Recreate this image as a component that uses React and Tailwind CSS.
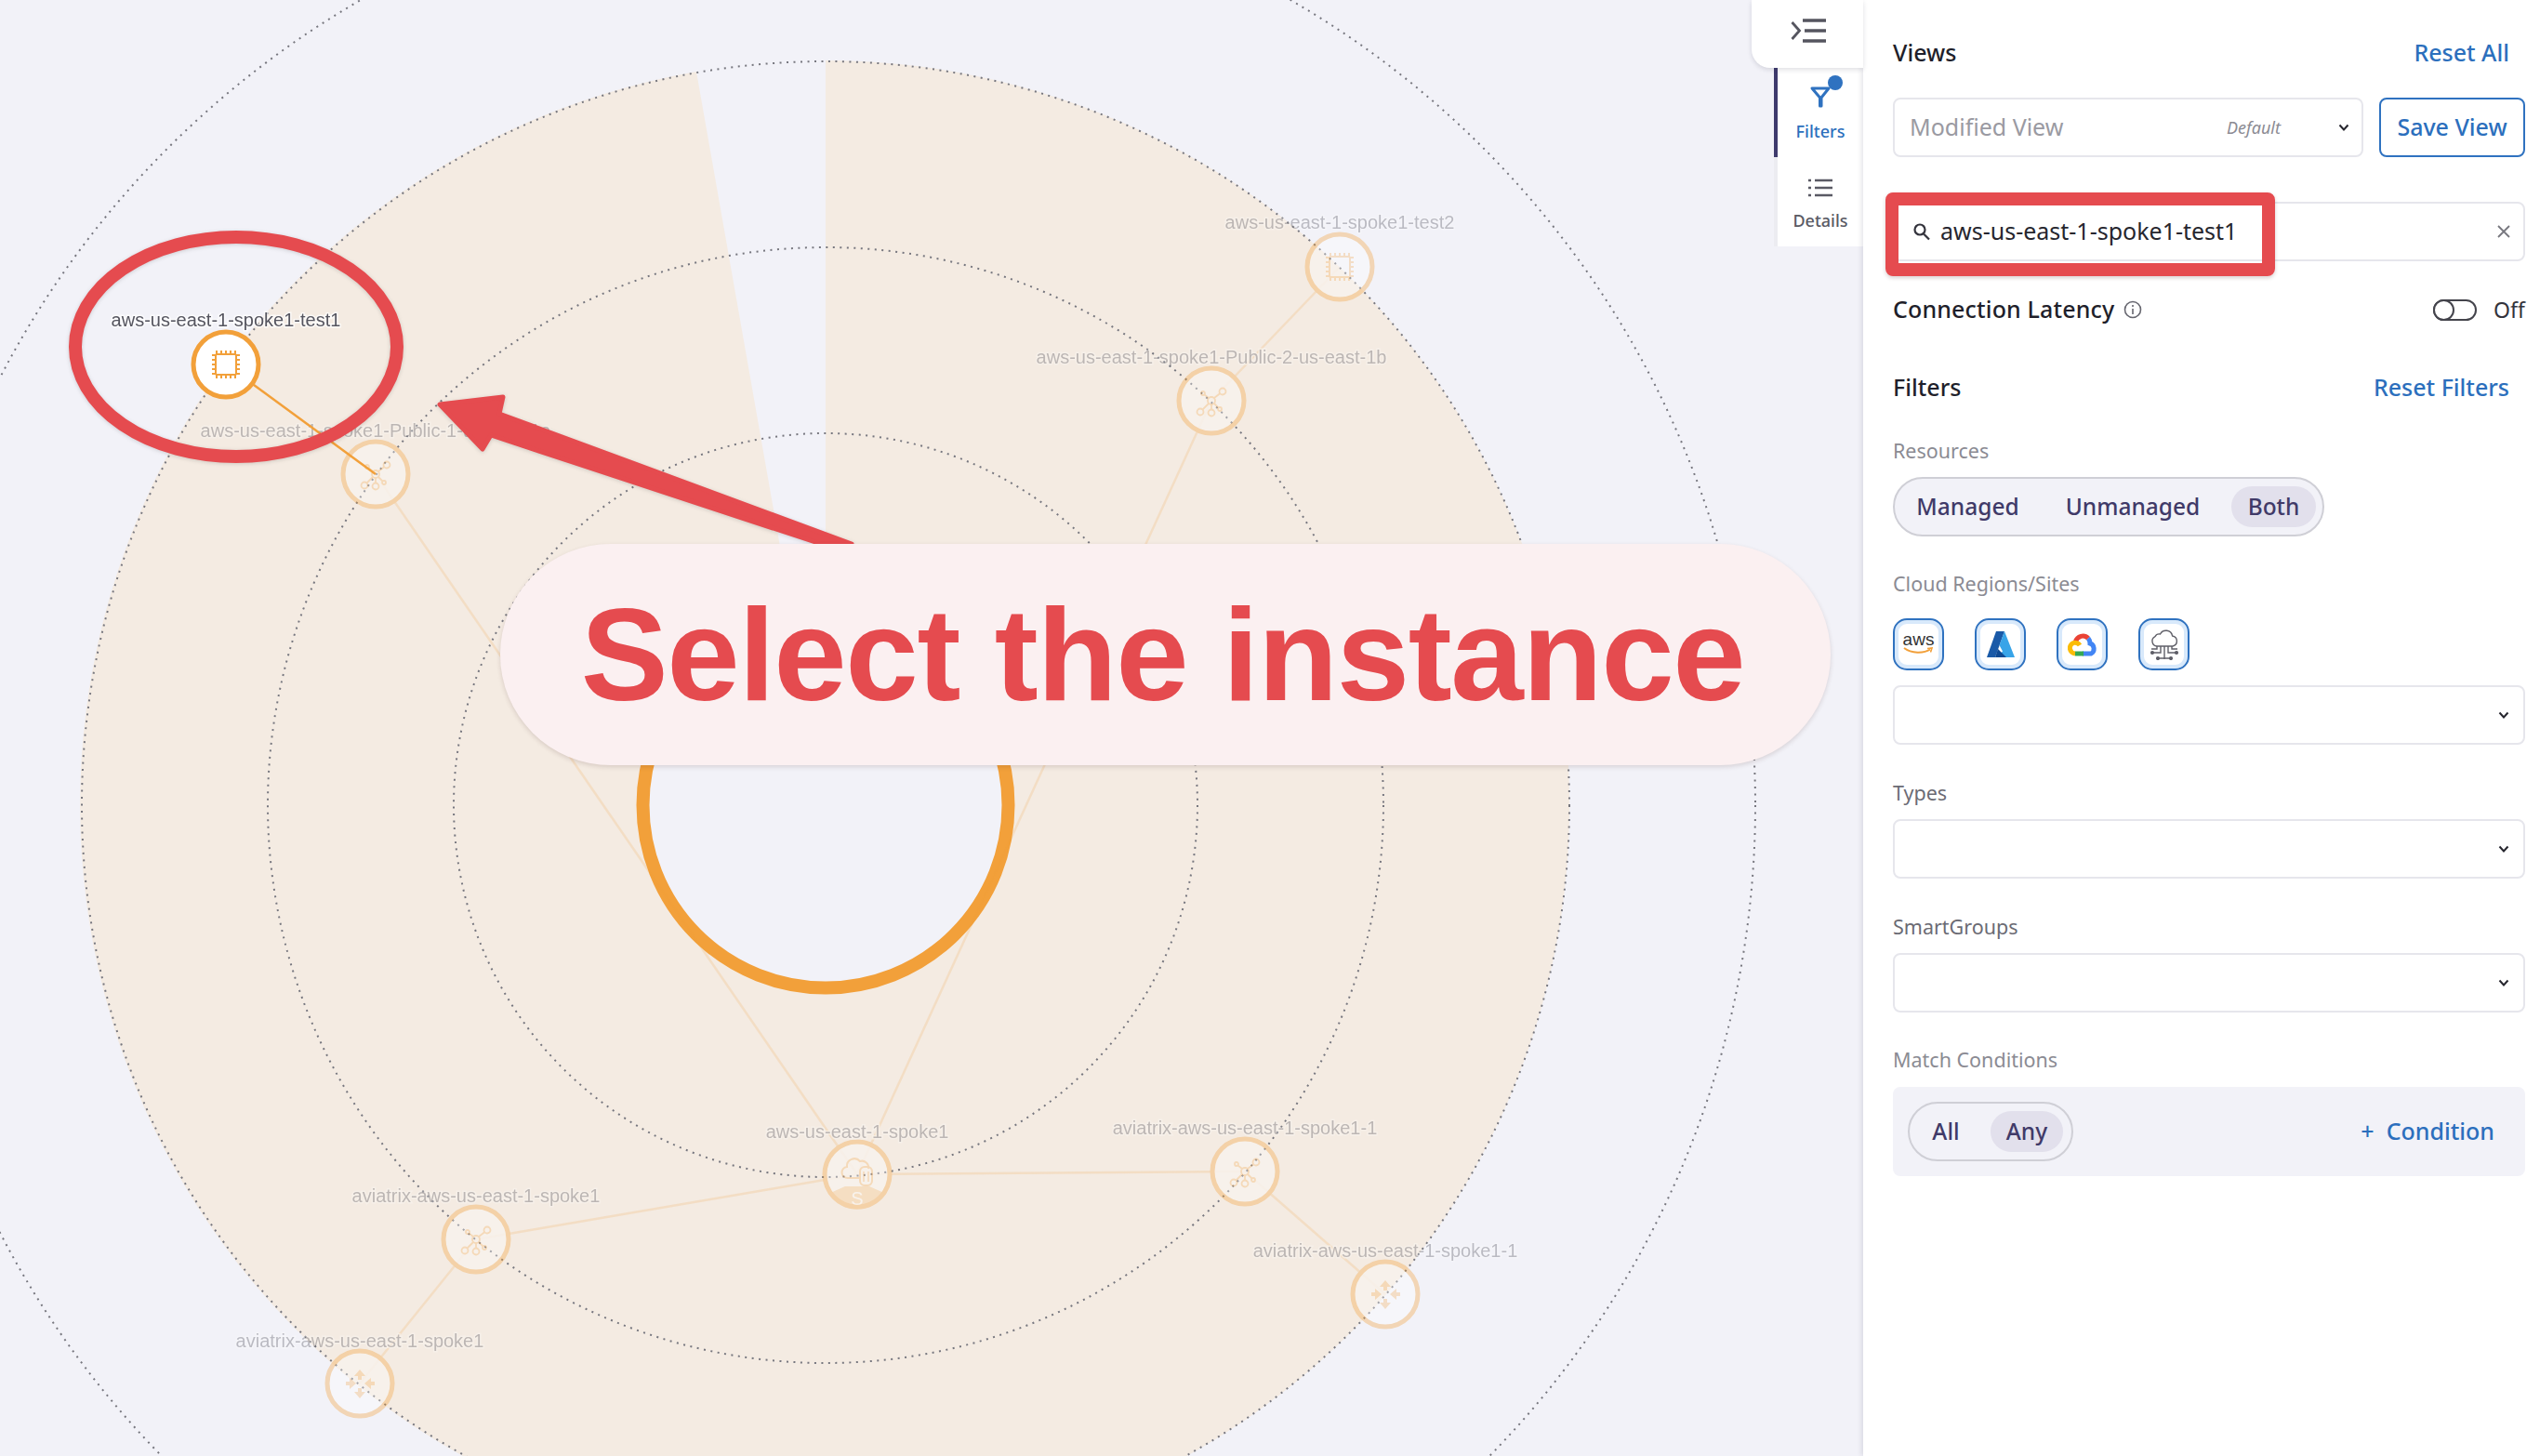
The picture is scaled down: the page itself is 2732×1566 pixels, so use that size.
import React from 'react';

const ORANGE = '#f2a03a';

function Chevron() {
  return (
    <svg width="12" height="8" viewBox="0 0 12 8" fill="none" stroke="#26262e" strokeWidth="2">
      <path d="M1.5 1.5 6 6.5l4.5-5" />
    </svg>
  );
}

function SectionLabel({ children, dark }) {
  return (
    <div className={`h-6 text-[21.5px] leading-[21px] ${dark ? 'text-[#6b6b74]' : 'text-[#8b8b93]'}`}>{children}</div>
  );
}

function Dropdown() {
  return (
    <div className="h-16 rounded-lg border-2 border-[#e6e6ec] bg-white flex items-center justify-end pr-[15px]">
      <Chevron />
    </div>
  );
}

function Seg({ children, active, width }) {
  return (
    <div className={`h-11 rounded-full flex items-center justify-center text-[24.5px] font-medium text-[#403a68] ${width} ${active ? 'bg-[#e2e0ec]' : ''}`}>
      {children}
    </div>
  );
}

function CloudButton({ children }) {
  return (
    <div className="w-[55px] h-14 rounded-[15px] border-2 border-[#2f72c0] bg-white shadow-[inset_0_0_0_4px_#d8e9fb] flex items-center justify-center">
      {children}
    </div>
  );
}

function ChipIcon() {
  const pins = [-10, -5, 0, 5, 10];
  return (
    <g stroke={ORANGE} strokeWidth="2" fill="none">
      <rect x="-11" y="-11" width="22" height="22" rx="1.5" />
      {pins.map((p) => (
        <g key={p}>
          <path d={`M${p} -15V-11M${p} 11V15M-15 ${p}H-11M11 ${p}H15`} />
        </g>
      ))}
    </g>
  );
}

function HubIcon() {
  return (
    <g stroke={ORANGE} strokeWidth="1.8" fill="none">
      <circle r="4" />
      <circle cx="12" cy="-10" r="3.5" />
      <circle cx="-9" cy="-8" r="2" />
      <circle cx="-12" cy="12" r="3.5" />
      <circle cx="0" cy="13" r="3.5" />
      <circle cx="9" cy="9" r="2" />
      <path d="M3 -3 9.5 -8M-3 -3-7.5 -6.5M-3 3-9.5 9.5M0 4V9.5M3 3 7.5 7.5" />
    </g>
  );
}

function GatewayIcon() {
  return (
    <g fill={ORANGE}>
      <path d="M0 -15 6 -8H2V-4H-2V-8H-6Z" />
      <path d="M0 16 6 9H2V5H-2V9H-6Z" />
      <path d="M-4 0-11 -6V-2H-15V2H-11V6Z" />
      <path d="M5 0 12 -6V-2H16V2H12V6Z" />
    </g>
  );
}

function SpokeIcon() {
  return (
    <g>
      <path d="M-13 13H13L31 21A37 37 0 0 1-31 21Z" fill={ORANGE} opacity="0.8" />
      <text x="0" y="33" textAnchor="middle" fontSize="20" fill="#fff" fontFamily="'Liberation Sans', sans-serif">S</text>
      <path d="M-10 4A6 6 0 0 1-11 -8 8 8 0 0 1 3 -14 7 7 0 0 1 12 -6" fill="none" stroke={ORANGE} strokeWidth="2" />
      <path d="M-10 4H2" fill="none" stroke={ORANGE} strokeWidth="2" />
      <rect x="3" y="-8" width="13" height="20" rx="5" fill="none" stroke={ORANGE} strokeWidth="2" />
      <path d="M7 -3V8M12 -3V8" stroke={ORANGE} strokeWidth="1.5" />
    </g>
  );
}

const fadedNodes = [
  { x: 404, y: 510, icon: 'hub', label: 'aws-us-east-1-spoke1-Public-1-us-east-1a', ly: 463 },
  { x: 1441, y: 287, icon: 'chip', label: 'aws-us-east-1-spoke1-test2', ly: 239 },
  { x: 1303, y: 431, icon: 'hub', label: 'aws-us-east-1-spoke1-Public-2-us-east-1b', ly: 384 },
  { x: 922, y: 1263, icon: 'spoke', label: 'aws-us-east-1-spoke1', ly: 1217 },
  { x: 1339, y: 1260, icon: 'hub', label: 'aviatrix-aws-us-east-1-spoke1-1', ly: 1213 },
  { x: 1490, y: 1392, icon: 'gw', label: 'aviatrix-aws-us-east-1-spoke1-1', ly: 1345 },
  { x: 512, y: 1333, icon: 'hub', label: 'aviatrix-aws-us-east-1-spoke1', ly: 1286 },
  { x: 387, y: 1488, icon: 'gw', label: 'aviatrix-aws-us-east-1-spoke1', ly: 1442 },
];

const links = [
  [404, 510, 922, 1263],
  [1441, 287, 1303, 431],
  [1303, 431, 922, 1263],
  [922, 1263, 512, 1333],
  [922, 1263, 1339, 1260],
  [512, 1333, 387, 1488],
  [1339, 1260, 1490, 1392],
];

function NodeLabel({ x, y, children, fill }) {
  return (
    <text
      x={x}
      y={y + 7}
      textAnchor="middle"
      fontSize="20"
      fill={fill}
      stroke="#ffffff"
      strokeOpacity="0.7"
      strokeWidth="3"
      paintOrder="stroke"
      fontFamily="'Liberation Sans', Arial, sans-serif"
    >
      {children}
    </text>
  );
}

function Topology() {
  return (
    <svg width="1908" height="1566" viewBox="0 0 1908 1566" className="block">
      {/* region sector, leaves a 10deg gap at the top */}
      <path d="M888 866 L888 65 A801 801 0 1 1 749 77 Z" fill="#f4ebe2" />
      <circle cx="888" cy="866" r="196.5" fill="#f2f2f8" stroke={ORANGE} strokeWidth="14" />
      {[400, 600, 800, 1000].map((r) => (
        <circle key={r} cx="888" cy="866" r={r} fill="none" stroke="#77777f" strokeWidth="2" strokeDasharray="2 5.5" />
      ))}

      <g opacity="0.35">
        {links.map((l, i) => (
          <line key={i} x1={l[0]} y1={l[1]} x2={l[2]} y2={l[3]} stroke={ORANGE} strokeWidth="2.5" opacity="0.5" />
        ))}
        {fadedNodes.map((n, i) => (
          <g key={i} transform={`translate(${n.x} ${n.y})`}>
            <circle r="35" fill="#ffffff" fillOpacity="0.9" stroke={ORANGE} strokeWidth="5" />
            <g opacity="0.75">
              {n.icon === 'hub' && <HubIcon />}
              {n.icon === 'chip' && <ChipIcon />}
              {n.icon === 'gw' && <GatewayIcon />}
              {n.icon === 'spoke' && <SpokeIcon />}
            </g>
          </g>
        ))}
        {fadedNodes.map((n, i) => (
          <NodeLabel key={i} x={n.x} y={n.ly} fill="#55555f">{n.label}</NodeLabel>
        ))}
      </g>

      {/* selected instance */}
      <line x1="243" y1="392" x2="404" y2="510" stroke={ORANGE} strokeWidth="2.5" />
      <g transform="translate(243 392)">
        <circle r="35" fill="#ffffff" stroke={ORANGE} strokeWidth="5" />
        <ChipIcon />
      </g>
      <NodeLabel x={243} y={344} fill="#55555f">aws-us-east-1-spoke1-test1</NodeLabel>

      {/* annotation */}
      <g className="drop-shadow-sm">
        <ellipse cx="254" cy="373" rx="173" ry="118" fill="none" stroke="#e54b4f" strokeWidth="14" />
        <path
          d="M473 435 L541 427 L537 445 L916 585 L883 585 L528 468 L519 483 Z"
          fill="#e54b4f"
          stroke="#e54b4f"
          strokeWidth="5"
          strokeLinejoin="round"
        />
      </g>
    </svg>
  );
}

function FilterTabIcon() {
  return (
    <svg width="38" height="36" viewBox="0 0 38 36" fill="none">
      <path d="M3 14H21L13 24V33H11.5V24Z" stroke="#2f72c0" strokeWidth="3" strokeLinejoin="round" />
      <circle cx="28" cy="8" r="8" fill="#2f72c0" />
    </svg>
  );
}

function DetailsTabIcon() {
  return (
    <svg width="26" height="20" viewBox="0 0 26 20" fill="none" stroke="#5a5a64" strokeWidth="2.4">
      <path d="M0 2H3M7 2H26M0 10H3M7 10H26M0 18H3M7 18H26" />
    </svg>
  );
}

function CollapseIcon() {
  return (
    <svg width="38" height="26" viewBox="0 0 38 26" fill="none" stroke="#55555f" strokeWidth="3.4">
      <path d="M13 2H38M15 13H38M13 24H38" />
      <path d="M1.5 4 9.5 13 1.5 22" strokeWidth="2.8" />
    </svg>
  );
}

function AwsLogo() {
  return (
    <div className="flex flex-col items-center leading-none -mt-[3px]">
      <span className="text-[19px] leading-[17px] text-[#333] font-['Liberation_Sans',sans-serif]">aws</span>
      <svg width="32" height="8" viewBox="0 0 32 8" fill="none">
        <path d="M1 1C9 7 22 7 29 2.5" stroke="#f2a03a" strokeWidth="2" />
        <path d="M26 1.5 31 1 29.5 5.5" stroke="#f2a03a" strokeWidth="1.6" />
      </svg>
    </div>
  );
}

function AzureLogo() {
  return (
    <svg width="30" height="28" viewBox="0 0 30 28">
      <path d="M10 0H19L9 28H0Z" fill="#1a5aa8" />
      <path d="M19 0 30 28H11L17 21.5 13.5 15Z" fill="#38a4e8" />
      <path d="M12 19 21 28H9Z" fill="#0f4a94" />
    </svg>
  );
}

function GoogleCloudLogo() {
  return (
    <svg width="32" height="26" viewBox="0 0 32 26" fill="none" strokeWidth="5">
      <path d="M8.5 10A8 8 0 0 1 22 6.5" stroke="#ea4335" />
      <path d="M22 6.5A8 8 0 0 1 24 12 6 6 0 0 1 25 23H16" stroke="#4285f4" />
      <path d="M17 23H8" stroke="#34a853" />
      <path d="M8 23A6 6 0 0 1 6 11.5 6 6 0 0 1 13 14" stroke="#fbbc05" />
    </svg>
  );
}

function SiteLogo() {
  return (
    <svg width="34" height="34" viewBox="0 0 34 34" fill="none" stroke="#5f5f68" strokeWidth="1.4">
      <path d="M9 19A5.5 5.5 0 0 1 7 8.6 5 5 0 0 1 12.5 6 7 7 0 0 1 25.6 8 5.6 5.6 0 0 1 26 19Z" />
      <path d="M13 19V26H5M17 19V33M21 19V26H29M9 19V22H3M25 19V22H31M11 32H23" />
      <circle cx="4" cy="26" r="1.4" fill="#5f5f68" />
      <circle cx="30" cy="26" r="1.4" fill="#5f5f68" />
      <circle cx="10" cy="32" r="1.4" fill="#5f5f68" />
      <circle cx="24" cy="32" r="1.4" fill="#5f5f68" />
    </svg>
  );
}

function FilterPanel() {
  return (
    <aside className="w-[728px] shrink-0 bg-white pl-8 pr-4 pt-10 shadow-[-2px_0_5px_rgba(40,40,70,0.12)]">
      <div className="h-[34px] flex items-center justify-between pr-[17px]">
        <span className="text-[25px] font-medium text-[#1f1f2b]">Views</span>
        <span className="text-[25px] font-medium text-[#2c6fbd]">Reset All</span>
      </div>

      <div className="mt-[31px] flex gap-[17px]">
        <div className="flex-1 h-16 rounded-lg border-2 border-[#e6e6ec] flex items-center pl-4 pr-[13px]">
          <span className="flex-1 text-[25px] text-[#9a9aa2]">Modified View</span>
          <span className="italic text-[18px] text-[#8b8b93] mr-[62px]">Default</span>
          <Chevron />
        </div>
        <div className="w-[157px] h-16 rounded-lg border-2 border-[#2f72c0] flex items-center justify-center text-[25px] font-medium text-[#2c6fbd]">
          Save View
        </div>
      </div>

      <div className="mt-[48px] h-16 rounded-lg border-2 border-[#e6e6ec] flex items-center pl-[19px] pr-[13px]">
        <svg width="20" height="20" viewBox="0 0 20 20" fill="none" stroke="#33333c" strokeWidth="2.2">
          <circle cx="8" cy="8" r="5.5" />
          <path d="M12 12.5 18 18.5" />
        </svg>
        <span className="ml-[10px] flex-1 text-[25px] text-[#26262e]">aws-us-east-1-spoke1-test1</span>
        <svg width="16" height="16" viewBox="0 0 16 16" fill="none" stroke="#77777f" strokeWidth="1.8">
          <path d="M2 2 14 14M14 2 2 14" />
        </svg>
      </div>

      <div className="mt-[35px] h-[34px] flex items-center">
        <span className="text-[25px] tracking-[0.15px] font-medium text-[#1f1f2b]">Connection Latency</span>
        <svg className="ml-[10px]" width="20" height="20" viewBox="0 0 20 20" fill="none" stroke="#66666f" strokeWidth="1.6">
          <circle cx="10" cy="10" r="8.5" />
          <path d="M10 9V15M10 5V7" />
        </svg>
        <div className="ml-auto w-[47px] h-[23px] rounded-full border-2 border-[#44444c] flex">
          <div className="-m-[2px] w-[23px] h-[23px] rounded-full border-2 border-[#44444c] bg-white" />
        </div>
        <span className="ml-[18px] w-[34px] text-[23px] text-[#33333c]">Off</span>
      </div>

      <div className="mt-[50px] h-[34px] flex items-center justify-between pr-[17px]">
        <span className="text-[25px] font-medium text-[#1f1f2b]">Filters</span>
        <span className="text-[25px] font-medium text-[#2c6fbd]">Reset Filters</span>
      </div>

      <div className="mt-10">
        <SectionLabel>Resources</SectionLabel>
      </div>
      <div className="mt-[15px] w-[464px] h-16 rounded-full border-2 border-[#cfcfd6] bg-[#f2f2f8] flex items-center pl-[7px] gap-4">
        <Seg width="w-[143px]">Managed</Seg>
        <Seg width="w-[180px]">Unmanaged</Seg>
        <Seg width="w-[91px]" active>Both</Seg>
      </div>

      <div className="mt-10">
        <SectionLabel>Cloud Regions/Sites</SectionLabel>
      </div>
      <div className="mt-6 flex gap-[33px]">
        <CloudButton><AwsLogo /></CloudButton>
        <CloudButton><AzureLogo /></CloudButton>
        <CloudButton><GoogleCloudLogo /></CloudButton>
        <CloudButton><SiteLogo /></CloudButton>
      </div>
      <div className="mt-4">
        <Dropdown />
      </div>

      <div className="mt-[41px]">
        <SectionLabel dark>Types</SectionLabel>
      </div>
      <div className="mt-[15px]">
        <Dropdown />
      </div>

      <div className="mt-[41px]">
        <SectionLabel dark>SmartGroups</SectionLabel>
      </div>
      <div className="mt-[15px]">
        <Dropdown />
      </div>

      <div className="mt-10">
        <SectionLabel>Match Conditions</SectionLabel>
      </div>
      <div className="mt-4 h-24 rounded-lg bg-[#f2f2f8] flex items-center pl-4 pr-[33px]">
        <div className="w-[178px] h-16 rounded-full border-2 border-[#cfcfd6] flex items-center pl-2 gap-[17px]">
          <Seg width="w-[62px]">All</Seg>
          <Seg width="w-[78px]" active>Any</Seg>
        </div>
        <span className="ml-auto text-[25px] font-medium text-[#2c6fbd]">+&nbsp;&nbsp;Condition</span>
      </div>
    </aside>
  );
}

export default function App() {
  return (
    <div className="relative w-[2732px] h-[1566px] overflow-hidden flex bg-[#f2f2f8] font-['Noto_Sans',sans-serif]">
      <main className="w-[1908px] shrink-0">
        <Topology />
      </main>

      <nav className="w-24 shrink-0 pt-[73px]">
        <div className="h-24 bg-white border-l-4 border-[#3e3a6d] flex flex-col items-center">
          <div className="mt-2 ml-[13px]"><FilterTabIcon /></div>
          <span className="mt-[11px] text-[18px] leading-[26px] font-medium text-[#2c6fbd]">Filters</span>
        </div>
        <div className="h-24 bg-white border-l-4 border-[#ececf1] flex flex-col items-center">
          <div className="mt-[23px]"><DetailsTabIcon /></div>
          <span className="mt-[12px] text-[18px] leading-[26px] font-medium text-[#5a5a64]">Details</span>
        </div>
      </nav>

      <FilterPanel />

      {/* collapse button sits over the tab strip */}
      <div className="absolute left-[1884px] top-0 w-[120px] h-[73px] bg-white rounded-bl-[20px] shadow-[0_2px_5px_rgba(40,40,70,0.15)] flex items-center pl-[42px] pb-[8px]">
        <CollapseIcon />
      </div>

      {/* tutorial callouts */}
      <div className="absolute left-[538px] top-[585px] w-[1431px] h-[238px] rounded-full bg-[#fbf0f1] shadow-[0_2px_5px_rgba(60,30,30,0.15)] flex items-center justify-center pr-[6px]">
        <span className="text-[141px] tracking-[-1.35px] leading-none font-bold text-[#e54b4f] font-['Liberation_Sans',sans-serif]">Select the instance</span>
      </div>
      <div className="absolute left-[2028px] top-[207px] w-[419px] h-[90px] rounded-lg border-[14px] border-[#e54b4f] shadow-[0_2px_4px_rgba(60,30,30,0.2)]" />
    </div>
  );
}
